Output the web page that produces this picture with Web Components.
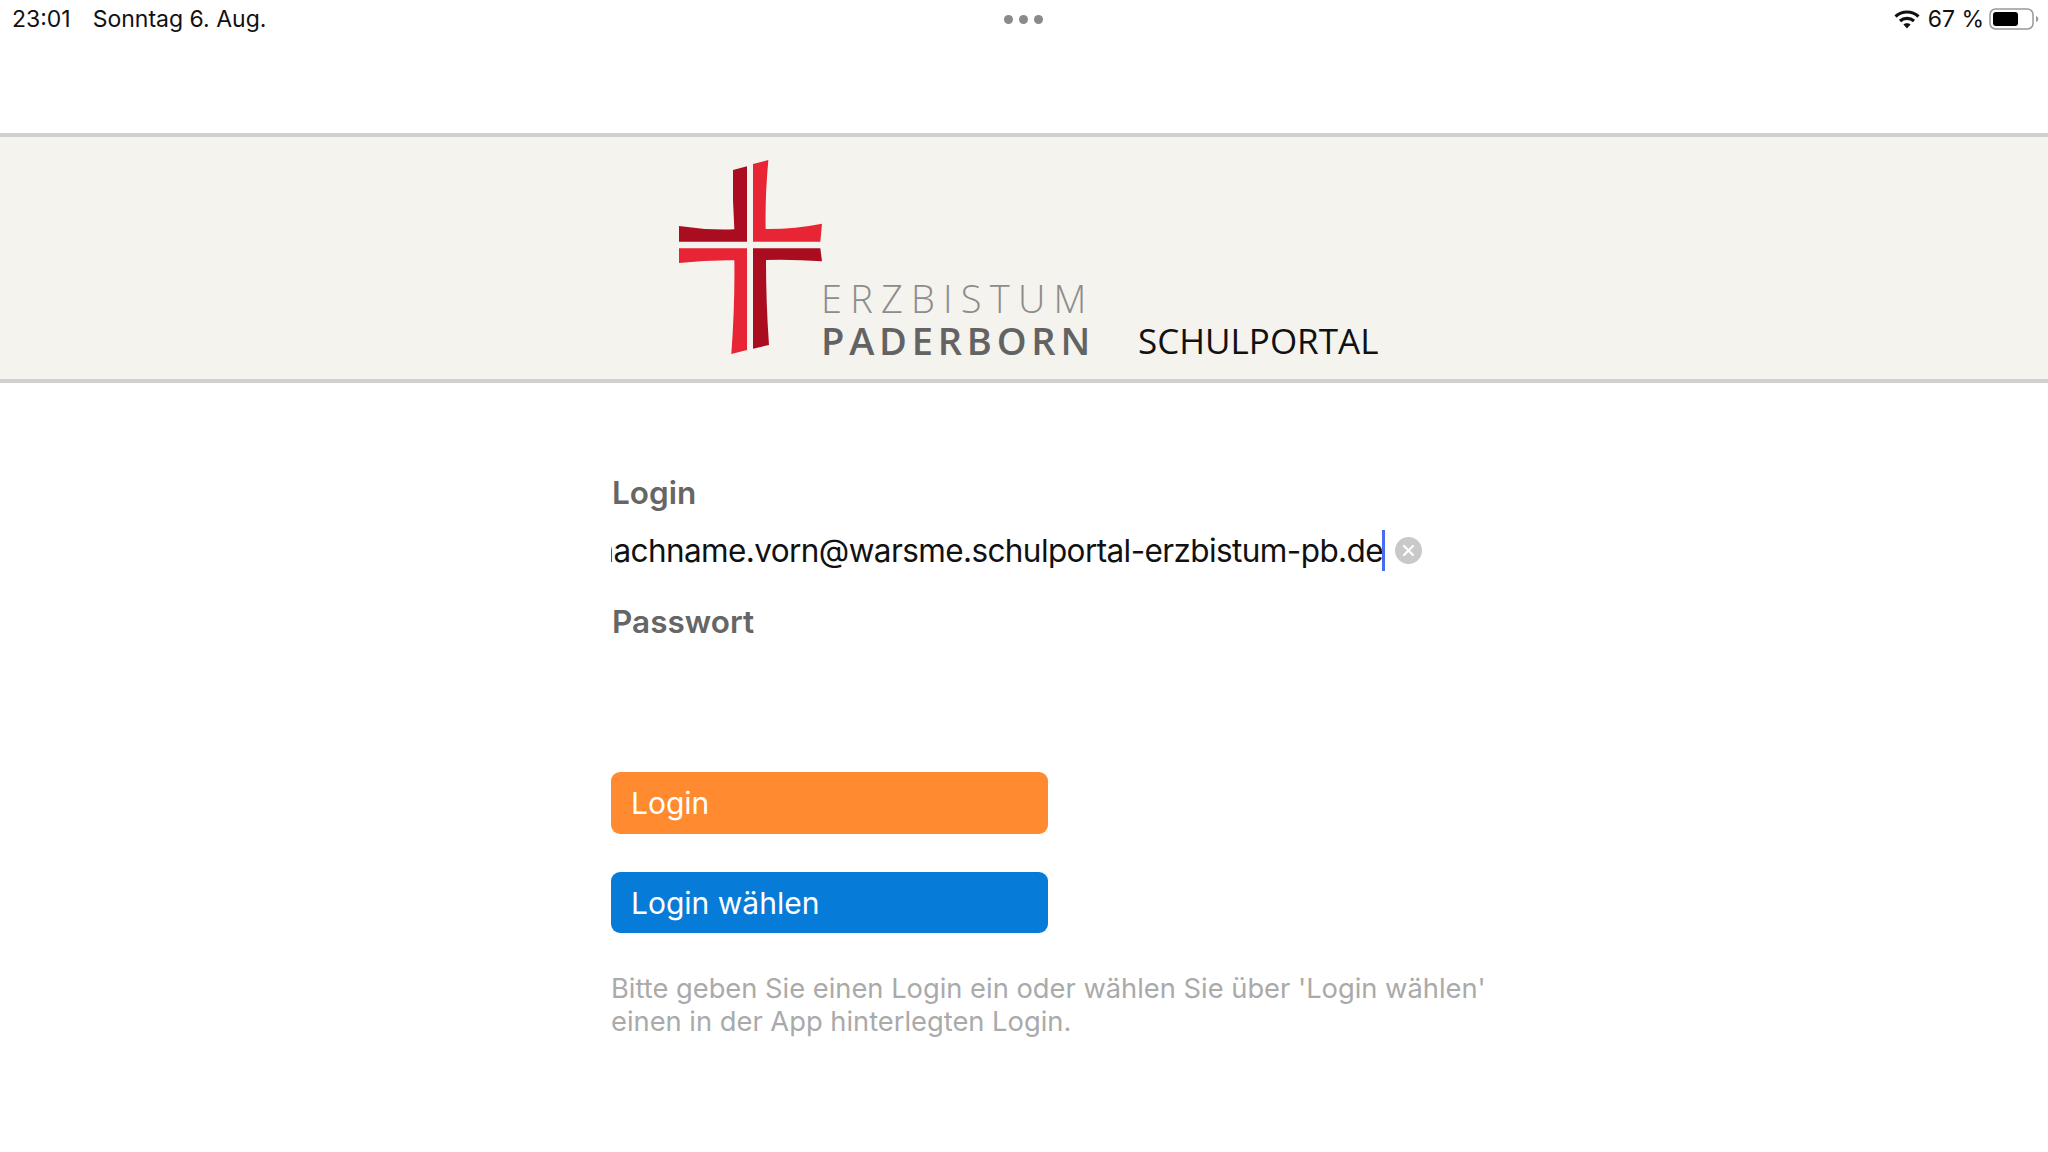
<!DOCTYPE html>
<html lang="de">
<head>
<meta charset="utf-8">
<title>Schulportal</title>
<style>
    html, body { margin: 0; padding: 0; background: #fff; }
    body { width: 2048px; height: 1152px; overflow: hidden; font-family: Inter, "Liberation Sans", sans-serif; }
</style>
</head>
<body>
<status-bar time="23:01" date="Sonntag 6. Aug." battery="67 %"></status-bar>
<portal-header></portal-header>
<login-form>
    <form-label>Login</form-label>
    <form-input value="nachname.vorn@warsme.schulportal-erzbistum-pb.de"></form-input>
    <form-label>Passwort</form-label>
    <div style="height:130px"></div>
    <action-button color="#ff8a30" height="62">Login</action-button>
    <action-button color="#067cd8" height="61" style="margin-top:38px">Login wählen</action-button>
    <help-text>Bitte geben Sie einen Login ein oder wählen Sie über 'Login wählen'<br>einen in der App hinterlegten Login.</help-text>
</login-form>

<script>
class StatusBar extends HTMLElement {
    connectedCallback() {
        const root = this.attachShadow({ mode: 'open' });
        root.innerHTML = `
<style>
    :host { display: grid; grid-template-columns: 1fr auto 1fr; align-items: center; height: 38px; padding: 0 9px 0 12px; font-size: 23px; color: #111; }
    .left { display: flex; gap: 22px; }
    .dots { display: flex; gap: 6px; margin-right: 4px; }
    .dots i { width: 9px; height: 9px; border-radius: 50%; background: #8a8a8a; }
    .right { display: flex; justify-content: flex-end; align-items: center; gap: 7px; }
    .wifi { margin-right: 1px; }
    .battery { margin-left: -2px; }
</style>
<div class="left"><span>${this.getAttribute('time')}</span><span>${this.getAttribute('date')}</span></div>
<div class="dots"><i></i><i></i><i></i></div>
<div class="right">
    <svg class="wifi" width="26" height="20" viewBox="0 0 26 20" fill="none" stroke="#111" stroke-width="3.2">
        <path d="M1.5 7.5C8 1.5 18 1.5 24.5 7.5"/><path d="M6 12C10 8.5 16 8.5 20 12"/>
        <path d="M13 19.5l-3.6-4c2-1.800 5.200-1.800 7.200 0z" fill="#111" stroke="none"/>
    </svg>
    <span>${this.getAttribute('battery')}</span>
    <svg class="battery" width="50" height="22" viewBox="0 0 50 22">
        <rect x="1" y="1" width="43" height="20" rx="5.500" fill="none" stroke="#999" stroke-width="1.500"/>
        <rect x="4" y="4" width="25" height="14" rx="3" fill="#000"/>
        <path d="M47 8c1.500.5 2.300 1.600 2.300 3s-.8 2.500-2.300 3z" fill="#999"/>
    </svg>
</div>`;
    }
}

class PortalHeader extends HTMLElement {
    connectedCallback() {
        const root = this.attachShadow({ mode: 'open' });
        root.innerHTML = `
<style>
    :host { display: flex; align-items: flex-end; box-sizing: border-box; height: 250px; margin-top: 95px; padding: 0 0 17px 679px; background: #f4f3ee; border-top: 4px solid #d0d0ce; border-bottom: 4px solid #d0d0ce; font-family: "Open Sans", sans-serif; }
    svg { display: block; margin-bottom: 8px; }
    .mark { display: flex; flex-direction: column; margin-left: -1px; }
    .top { font-size: 38px; line-height: 41px; font-weight: 300; letter-spacing: 8.2px; color: #8c8c8c; }
    .bottom { font-size: 38px; line-height: 43px; font-weight: 600; letter-spacing: 4.8px; color: #636363; }
    .name { margin-left: 43px; font-size: 35px; line-height: 43px; color: #111; }
</style>
<svg width="143" height="194" viewBox="117 90 429 582">
    <path fill="#ab0d20" d="M279 120L321 109V335H117V288Q200 301 283 298Q277 210 279 120Z"/>
    <path fill="#e82535" d="M339 102L385 90Q375 200 377 297Q460 298 546 281L541 335H339Z"/>
    <path fill="#e82535" d="M117 355H321V660L274 672Q285 520 283 391Q200 390 117 399Z"/>
    <path fill="#ab0d20" d="M339 355H541L546 394Q460 388 378 390Q378 520 387 645L339 656Z"/>
</svg>
<div class="mark"><span class="top">ERZBISTUM</span><span class="bottom">PADERBORN</span></div>
<span class="name">SCHULPORTAL</span>`;
    }
}

class LoginForm extends HTMLElement {
    constructor() {
        super();
        this.attachShadow({ mode: 'open' }).innerHTML = `
<style>
    :host { display: block; width: 900px; margin-left: 611px; padding-top: 90px; }
</style>
<slot></slot>`;
    }
}

class FormLabel extends HTMLElement {
    constructor() {
        super();
        this.attachShadow({ mode: 'open' }).innerHTML = `
<style>
    :host { display: block; font-size: 31.5px; line-height: 40px; font-weight: 600; color: #666; padding-left: 1px; }
</style>
<slot></slot>`;
    }
}

class FormInput extends HTMLElement {
    connectedCallback() {
        const root = this.attachShadow({ mode: 'open' });
        root.innerHTML = `
<style>
    :host { display: flex; align-items: center; height: 74px; margin-bottom: 15px; }
    .field { display: flex; justify-content: flex-end; width: 774px; overflow: hidden; font-size: 31.5px; letter-spacing: -0.6px; line-height: 41px; color: #111; white-space: nowrap; }
    .caret { flex: none; width: 3px; height: 41px; margin-left: -1px; background: #4a6cf0; }
    .clear { margin-left: 10px; }
</style>
<div class="field"><span>${this.getAttribute('value')}</span><span class="caret"></span></div>
<svg class="clear" width="27" height="27" viewBox="0 0 27 27">
    <circle cx="13.500" cy="13.500" r="13.500" fill="#c9c9c9"/>
    <path d="M9 9l9 9M18 9l-9 9" stroke="#fff" stroke-width="2.200" stroke-linecap="round"/>
</svg>`;
    }
}

class ActionButton extends HTMLElement {
    connectedCallback() {
        const root = this.attachShadow({ mode: 'open' });
        root.innerHTML = `
<style>
    :host { display: flex; align-items: center; box-sizing: border-box; width: 437px; height: ${this.getAttribute('height')}px; padding-left: 20px; border-radius: 9px; background: ${this.getAttribute('color')}; color: #fff; font-size: 30px; }
</style>
<slot></slot>`;
    }
}

class HelpText extends HTMLElement {
    constructor() {
        super();
        this.attachShadow({ mode: 'open' }).innerHTML = `
<style>
    :host { display: block; margin-top: 39px; font-size: 27.3px; line-height: 33px; color: #aaa; }
</style>
<slot></slot>`;
    }
}

customElements.define('status-bar', StatusBar);
customElements.define('portal-header', PortalHeader);
customElements.define('login-form', LoginForm);
customElements.define('form-label', FormLabel);
customElements.define('form-input', FormInput);
customElements.define('action-button', ActionButton);
customElements.define('help-text', HelpText);
</script>
</body>
</html>
